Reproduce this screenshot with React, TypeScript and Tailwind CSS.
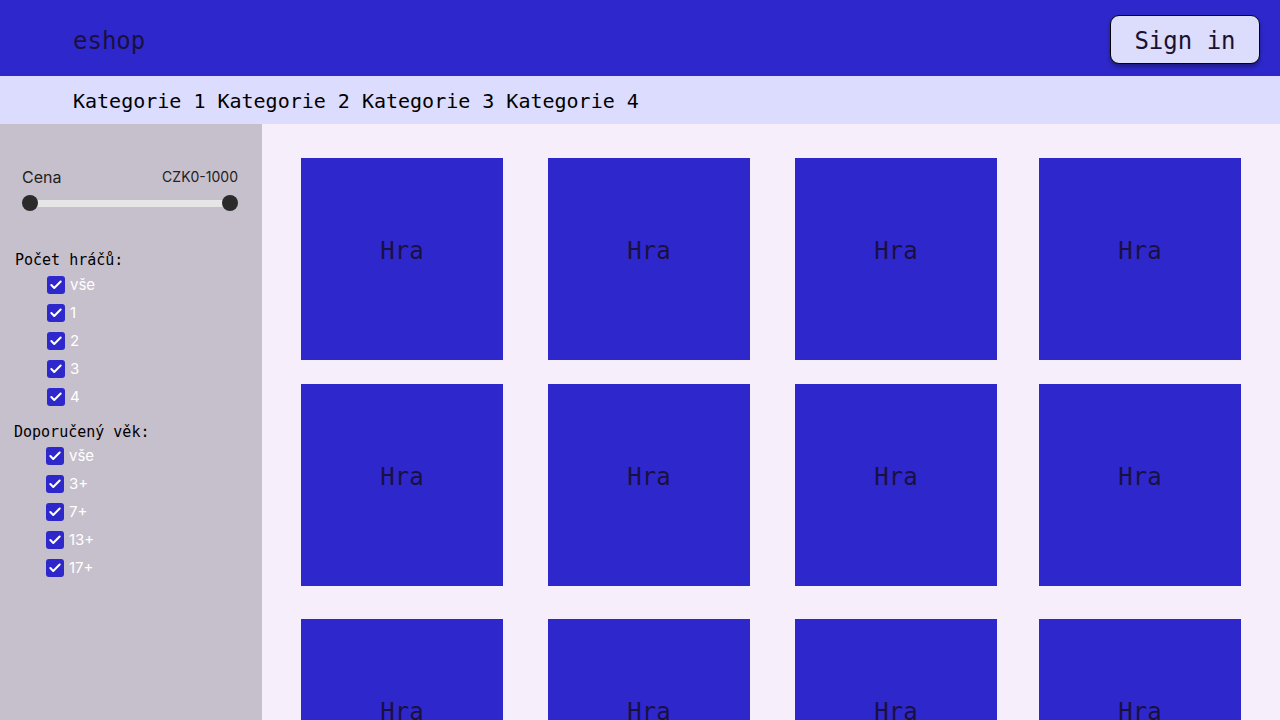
import { Check } from 'lucide-react'

const mono = { fontFamily: '"DejaVu Sans Mono", "Liberation Mono", monospace' }

const categories = ['Kategorie 1', 'Kategorie 2', 'Kategorie 3', 'Kategorie 4']
const players = ['vše', '1', '2', '3', '4']
const ages = ['vše', '3+', '7+', '13+', '17+']

function CheckRow({ label }: { label: string }) {
  return (
    <label className="flex items-center gap-[5px] h-[28px]">
      <span className="w-[18px] h-[18px] rounded-[3px] bg-[#2e28cc] flex items-center justify-center">
        <Check size={14} strokeWidth={3.5} className="text-white" />
      </span>
      <span className="text-[15px] text-white font-['Inter',sans-serif]">{label}</span>
    </label>
  )
}

function Card() {
  return (
    <div className="w-[202px] h-[202px] bg-[#2e28cc] flex items-center justify-center pb-[17px]">
      <span className="text-[24px] text-[#1a1040]" style={mono}>Hra</span>
    </div>
  )
}

function Row({ className = '' }: { className?: string }) {
  return (
    <div className={`grid grid-cols-[247px_247px_244px_202px] ${className}`}>
      <Card /><Card /><Card /><Card />
    </div>
  )
}

export default function App() {
  return (
    <div className="w-[1280px] h-[720px] overflow-hidden flex flex-col bg-[#f6eefb]">
      {/* Header */}
      <header className="h-[76px] shrink-0 bg-[#2e28cc] flex items-center justify-between pl-[73px] pr-[20px]">
        <span className="text-[24px] text-[#1a1040] mt-[5px]" style={mono}>eshop</span>
        <button
          className="w-[150px] h-[49px] mt-[2px] pt-[3px] rounded-[9px] border border-black bg-[#dcdcfc] text-[24px] text-[#1a1030] shadow-[0_3px_4px_rgba(0,0,0,0.35)]"
          style={mono}
        >
          Sign in
        </button>
      </header>

      {/* Categories */}
      <nav className="h-[48px] shrink-0 bg-[#dcdcfe] flex items-center gap-[12px] pl-[73px] pt-[2px]">
        {categories.map(c => (
          <span key={c} className="text-[20px] text-black" style={mono}>{c}</span>
        ))}
      </nav>

      <div className="flex flex-1 min-h-0">
        {/* Sidebar */}
        <aside className="w-[262px] shrink-0 bg-[#c6bfcc] pt-[166px] relative">
          <div className="absolute top-[41px] left-[22px] right-[24px] font-['Inter',sans-serif]">
            <div className="flex items-end justify-between">
              <span className="text-[16px] text-[#222]">Cena</span>
              <span className="text-[14px] text-[#222] mb-[2px]">CZK0-1000</span>
            </div>
            <div className="relative h-[16px] mt-[6px]">
              <div className="absolute left-[8px] right-[8px] top-[5px] h-[7px] bg-[#e6e6e6]" />
              <div className="absolute left-0 top-0 w-[16px] h-[16px] rounded-full bg-[#2b2b2b]" />
              <div className="absolute right-0 top-0 w-[16px] h-[16px] rounded-full bg-[#2b2b2b]" />
            </div>
          </div>
          <div className="px-[15px] -mt-[40px]">
            <p className="text-[15px] text-black leading-[20px]" style={mono}>Počet hráčů:</p>
            <div className="pl-[32px] mt-[1px]">
              {players.map(p => <CheckRow key={p} label={p} />)}
            </div>
          </div>
          <div className="px-[14px] mt-[11px]">
            <p className="text-[15px] text-black leading-[20px]" style={mono}>Doporučený věk:</p>
            <div className="pl-[32px]">
              {ages.map(a => <CheckRow key={a} label={a} />)}
            </div>
          </div>
        </aside>

        {/* Products */}
        <main className="flex-1 pl-[39px] pt-[34px]">
          <Row />
          <Row className="mt-[24px]" />
          <Row className="mt-[33px]" />
        </main>
      </div>
    </div>
  )
}
